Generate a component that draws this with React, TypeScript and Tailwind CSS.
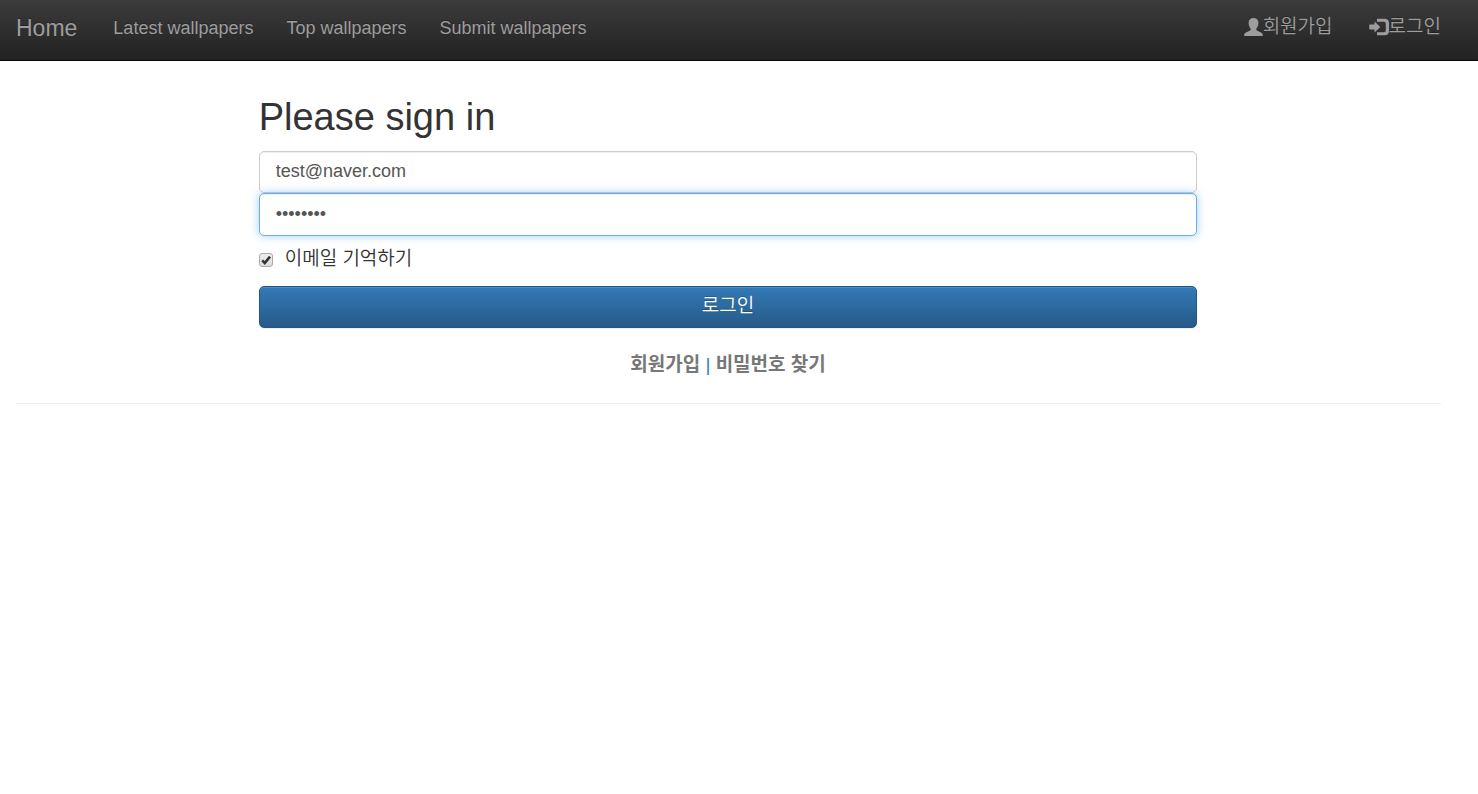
import { useState } from "react";

const navLinks = ["Latest wallpapers", "Top wallpapers", "Submit wallpapers"];

function UserIcon() {
  return (
    <svg aria-hidden="true" viewBox="0 0 19 18" className="h-[18px] w-[19px] shrink-0 fill-current">
      <path d="M9.5 0C12.8 0 14.4 2 14.4 5C14.4 7.2 13.7 9 12.6 10.3C12 11.2 12.1 12 13 12.5L17.4 14.8C18.4 15.3 18.8 16 18.8 17V17.4Q18.8 18 18.2 18H.8Q.2 18 .2 17.4V17C.2 16 .6 15.3 1.6 14.8L6 12.5C6.9 12 7 11.2 6.4 10.3C5.3 9 4.6 7.2 4.6 5C4.6 2 6.2 0 9.5 0Z" />
    </svg>
  );
}

function LoginIcon() {
  return (
    <svg aria-hidden="true" viewBox="0 0 20 18" className="h-[18px] w-5 shrink-0 fill-current">
      <path d="M5.5 3.6L11.3 9L5.5 14.4V11.4H1Q.2 11.4 .2 10.6V7.4Q.2 6.6 1 6.6H5.5Z" />
      <path d="M8 .8H15.5Q20 .8 20 5.3V12.7Q20 17.2 15.5 17.2H8V14.2H14.8Q16.8 14.2 16.8 12.2V5.8Q16.8 3.8 14.8 3.8H8Z" />
    </svg>
  );
}

function Navbar() {
  return (
    <header className="border-b border-[#080808] bg-linear-to-b from-[#3c3c3c] to-[#222] text-[#9d9d9d] [text-shadow:0_-1px_0_rgba(0,0,0,.25)]">
      <nav className="flex h-[60px] items-start justify-between pr-[37px] pl-4">
        <div className="flex h-14 items-center">
          <a href="#home" className="mr-9 text-[23px] leading-6">
            Home
          </a>
          <ul className="flex gap-[33px]">
            {navLinks.map((label) => (
              <li key={label}>
                <a href="#wallpapers">{label}</a>
              </li>
            ))}
          </ul>
        </div>
        <ul className="flex h-[53px] items-center gap-9 text-[19px] font-[350]">
          <li>
            <a href="#join" className="flex items-center">
              <UserIcon />
              <span>회원가입</span>
            </a>
          </li>
          <li>
            <a href="#login" className="flex items-center">
              <LoginIcon />
              <span>로그인</span>
            </a>
          </li>
        </ul>
      </nav>
    </header>
  );
}

function SignInForm() {
  const [email, setEmail] = useState("test@naver.com");
  const [password, setPassword] = useState("password");
  const [remember, setRemember] = useState(true);

  return (
    <form className="flex flex-col" onSubmit={(e) => e.preventDefault()}>
      <h2 className="mb-[13px] text-[38px] leading-[42px]">Please sign in</h2>
      <input
        type="email"
        aria-label="Email"
        value={email}
        onChange={(e) => setEmail(e.target.value)}
        className="h-[42px] w-full rounded-[5px] border border-[#ccc] bg-white px-4 pb-0.5 text-[#555] shadow-[inset_0_1px_1px_rgba(0,0,0,.075)] outline-none"
      />
      <input
        type="password"
        aria-label="Password"
        value={password}
        onChange={(e) => setPassword(e.target.value)}
        className="h-[43px] w-full rounded-[5px] border border-[#66afe9] bg-white px-4 text-[#555] shadow-[inset_0_1px_1px_rgba(0,0,0,.075),0_0_10px_rgba(102,175,233,.6)] outline-none"
      />
      <label className="mt-[10px] flex h-6 items-center gap-3 text-[19px] font-[350]">
        <span className="relative mt-1 flex">
          <input
            type="checkbox"
            checked={remember}
            onChange={(e) => setRemember(e.target.checked)}
            className="peer size-[14px] appearance-none rounded-[3px] border border-[#aaa] bg-linear-to-b from-[#eee] to-[#ddd]"
          />
          <svg
            aria-hidden="true"
            viewBox="0 0 14 14"
            className="pointer-events-none absolute inset-0 hidden size-[14px] peer-checked:block"
          >
            <path d="M3.2 7.3L5.8 10L11 3.6" fill="none" stroke="#333" strokeWidth="2.6" />
          </svg>
        </span>
        <span>이메일 기억하기</span>
      </label>
      <button
        type="submit"
        className="mt-4 h-[42px] w-full rounded-[5px] border border-[#245580] bg-linear-to-b from-[#337ab7] to-[#265a88] pb-1 text-[19px] font-[350] text-white shadow-[inset_0_1px_0_rgba(255,255,255,.15),0_1px_1px_rgba(0,0,0,.075)] [text-shadow:0_-1px_0_rgba(0,0,0,.2)]"
      >
        로그인
      </button>
      <p className="mt-6 text-center text-[19px] text-[#337ab7]">
        <a href="#join" className="font-bold text-[#777]">
          회원가입
        </a>{" "}
        |{" "}
        <a href="#password" className="font-bold text-[#777]">
          비밀번호 찾기
        </a>
      </p>
    </form>
  );
}

export default function App() {
  return (
    <div className="min-h-screen bg-white font-['Liberation_Sans','Noto_Sans_CJK_KR',sans-serif] text-[18px] leading-[25px] text-[#333]">
      <Navbar />
      <main className="pt-[35px] pr-[37px] pl-4">
        <div className="-mr-[18px] -ml-[19px]">
          <div className="mx-auto w-2/3 px-[18px]">
            <SignInForm />
          </div>
        </div>
        <hr className="mt-[26px] border-[#eee]" />
      </main>
    </div>
  );
}
